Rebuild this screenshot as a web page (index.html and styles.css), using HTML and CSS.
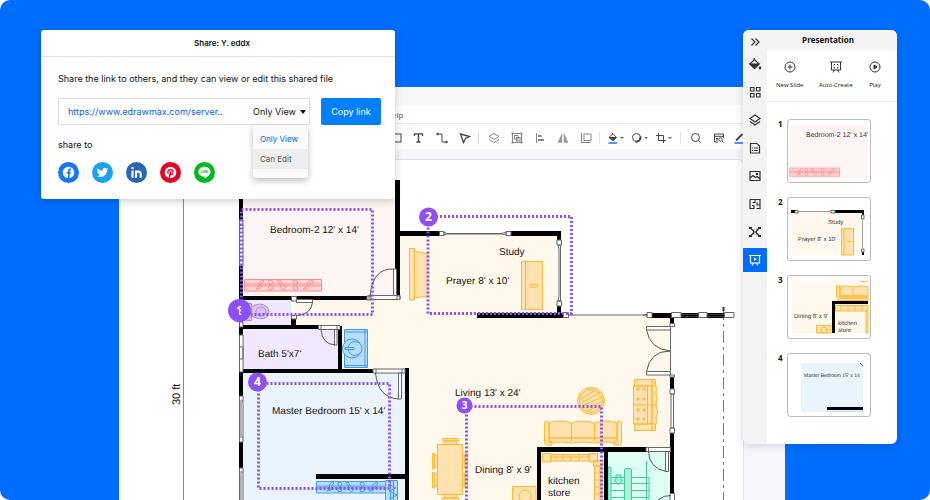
FILE: index.html
```html
<!DOCTYPE html>
<html lang="en">
<head>
<meta charset="utf-8">
<title>Floor plan sharing</title>
<link rel="stylesheet" href="styles.css">
</head>
<body>
<main class="stage">

  <section class="window" aria-label="Editor">
    <div class="titlebar"></div>
    <nav class="menubar"><a href="#help">Help</a></nav>
    <div class="toolbar" role="toolbar" aria-label="Drawing tools">
      <button class="tool" aria-label="Rectangle"><svg viewBox="0 0 12 12"><rect x="2" y="2" width="9" height="8"/></svg></button>
      <button class="tool" aria-label="Text"><svg viewBox="0 0 12 12"><path d="M1.500 4V1.800H9.500V4M5.500 2V10M3.500 10H7.500" stroke-width="1.300"/></svg></button>
      <button class="tool" aria-label="Connector"><svg viewBox="0 0 12 12"><path d="M2 2H6V10H10"/><circle cx="1.500" cy="2" r=".8" fill="#444"/><circle cx="10.500" cy="10" r=".8" fill="#444"/></svg></button>
      <button class="tool" aria-label="Select"><svg viewBox="0 0 12 12"><path d="M1.500 2L10.500 4.500L6.500 6.500L4.500 10.500Z" stroke-width="1.300"/></svg></button>
      <span class="sep"></span>
      <button class="tool soft" aria-label="Layers"><svg viewBox="0 0 12 12"><path d="M6 1.500L11 4.500L6 7.500L1 4.500ZM1 7.500L6 10.500L11 7.500"/></svg></button>
      <button class="tool soft" aria-label="Group"><svg viewBox="0 0 12 12"><rect x="1.500" y="1.500" width="9" height="9"/><rect x="3.500" y="3.500" width="3.500" height="3.500"/><rect x="5.500" y="5.500" width="3.500" height="3.500"/><path d="M.5 1.500h2M9.500 1.500h2M.5 10.500h2M9.500 10.500h2" stroke-width="2"/></svg></button>
      <button class="tool soft" aria-label="Align"><svg viewBox="0 0 12 12"><path d="M2.500 1V11"/><path d="M4 4H7.500M4 8H10" stroke-width="2"/></svg></button>
      <button class="tool soft" aria-label="Flip"><svg viewBox="0 0 12 12"><path d="M5 1.500V10.500H1ZM7 1.500V10.500H11Z" fill="#999" stroke="#999" stroke-width=".5"/></svg></button>
      <button class="tool soft" aria-label="Frame"><svg viewBox="0 0 12 12"><path d="M1.500 1V10.500H11"/><rect x="4" y="2" width="7" height="6.500"/></svg></button>
      <span class="sep"></span>
      <button class="tool wide" aria-label="Fill colour"><svg viewBox="0 0 12 12"><path d="M5 1L6 2M2 5.500L6 1.800L9.500 5.500L6 8.500Z"/><path d="M2.500 5.500H9.500L6 8.500Z" fill="#444"/><path d="M1.500 11H10" stroke="#0a7bff" stroke-width="1.500"/></svg><i class="caret"></i></button>
      <button class="tool wide" aria-label="Shadow"><svg viewBox="0 0 12 12"><circle cx="5.500" cy="5.500" r="4"/><path d="M9.500 4.500A4.500 4.500 0 0 1 4.500 9.700" stroke-width="2"/></svg><i class="caret"></i></button>
      <button class="tool wide" aria-label="Crop"><svg viewBox="0 0 12 12"><path d="M3.500 1V8.500H11M1 3.500H8.500V11"/></svg><i class="caret"></i></button>
      <span class="sep late"></span>
      <button class="tool" aria-label="Search"><svg viewBox="0 0 12 12"><circle cx="5.500" cy="5.500" r="4"/><path d="M8.500 8.500L10.500 10.500"/></svg></button>
      <button class="tool" aria-label="Find in page"><svg viewBox="0 0 12 12"><path d="M5 10H1.500V2H10.500V6M1.500 4.300H10.500M3 6.500H5M3 8H5"/><circle cx="7.500" cy="7.500" r="1.700"/><path d="M9 9L10.500 10.500"/></svg></button>
      <button class="tool narrow" aria-label="Pen"><svg viewBox="0 0 12 12"><path d="M3 8.500L9.500 2" stroke-width="1.800"/><path d="M1.500 11H11" stroke="#0a7bff" stroke-width="1.500"/></svg></button>
    </div>
    <div class="workspace">
      <svg class="plan" viewBox="121 160 622 340" preserveAspectRatio="xMinYMin slice" role="img" aria-label="Floor plan">
        <defs>
          <symbol id="hangers" viewBox="0 0 78 14" preserveAspectRatio="none">
            <path d="M.5 1.500H77.500V13H.5ZM.5 6H77.500M.5 8H77.500M12 11L15 9V5L18 2L20 3L17 6V10ZM24 3L27 2L29 4L27 7L29 11L25 12L24 10L26 7ZM33 3L36 2L38 6L42 9L40 12L37 10L36 6ZM49 3L52 2L54 4L52 7L54 11L50 12L49 10L51 7ZM59 11L62 9L64 4L68 2L69 4L66 6L63 11Z"/>
          </symbol>
        </defs>

        <!-- room floors -->
        <g class="floors">
          <path fill="#fff8ec" d="M400 234H559V315H671V500H341V326H294V299H400Z"/>
          <rect x="242" y="182" width="155" height="115" fill="#fff5f5"/>
          <rect x="242" y="299" width="49" height="27" fill="#f1e8ff"/>
          <rect x="242" y="329" width="97" height="41" fill="#f1e8ff"/>
          <rect x="242" y="372" width="164" height="128" fill="#eaf4ff"/>
          <rect x="607" y="450" width="64" height="50" fill="#ddfff3"/>
        </g>

        <!-- dimension lines -->
        <path d="M183.500 160V500" stroke="#888"/>
        <path d="M723.500 308V500" stroke="#777" stroke-dasharray="12 4 3 4"/>
        <path d="M723.500 307V311" stroke="#333" stroke-width="2"/>

        <!-- furniture -->
        <g class="amber">
          <path d="M409.500 248.500H414.500V300H409.500ZM414.500 251L428 254V296L414.500 298Z"/>
          <path d="M521.500 261.500H542.500V309.500H521.500ZM525.500 261.500V309.500M530.500 284.500H537.500V287H530.500Z"/>
          <path d="M437.500 444.500H462.500V494.500H437.500ZM442.500 438.500H458.500V441H442.500ZM444 441H457V444.500H444ZM432.500 453.500H434.500V469H432.500ZM434.500 455H437.500V467H434.500ZM432.500 472.500H434.500V488H432.500ZM434.500 474H437.500V486H434.500ZM465 453.500H467.500V469H465ZM465 472.500H467.500V488H465ZM462.500 455H465V467H462.500ZM462.500 474H465V486H462.500ZM444 494.500H457V498H444ZM442 498H459V501H442Z"/>
          <circle cx="591" cy="401" r="13.500"/><circle cx="591" cy="401" r="11.500"/>
          <path d="M581 399L594 391M582 402L600 393M582 406L602 397M586 408L601 402M587 411L600 405"/>
          <path d="M549 438V423Q560 419 571 423Q583 419 594 423Q606 419 617 423V438ZM571.500 423V441M594.500 423V441M549 438H617V443Q606 441 594 443Q583 441 571 443Q560 441 549 443ZM544.500 424Q544 421 547 421Q549 421 549 424V438Q549 441 552 442V445H546Q544.500 444 544.500 440ZM621.500 424Q622 421 619 421Q617 421 617 424V438Q617 441 614 442V445H620Q621.500 444 621.500 440Z"/>
          <path d="M633.500 386H647.500V424H633.500ZM634.500 379.500H655.500V386H634.500ZM634.500 424H655.500V430.500H634.500ZM647.500 386H652V424H647.500ZM652 380Q658 386 656 392Q658 399 656 405Q659 412 656 418Q658 425 652 430ZM633.500 405H656M636 389h4m-2-2v4M642 389h4m-2-2v4M636 399h4m-2-2v4M642 399h4m-2-2v4M636 410h4m-2-2v4M642 410h4m-2-2v4M636 419h4m-2-2v4M642 419h4m-2-2v4"/>
          <path d="M512.500 486.500H536V501H512.500Z"/><circle cx="525" cy="496" r="6"/>
          <path d="M542.500 453.500H551V462H542.500ZM589 453.500H597.500V462H589ZM551 454.500H589V461H551ZM551 457H589M556 454.500V461M563 454.500V461M571 454.500V461M579 454.500V461M593.500 460.500H603V466H593.500ZM594.500 466H602V501H594.500ZM600 466V501M594.500 473H602M594.500 480H602M594.500 487H602M594.500 494H602"/>
        </g>
        <g class="sky">
          <path d="M344.500 329.500H367.500V367.500H344.500ZM344.500 332H367.500M344.500 365.500H367.500M365 329.500V367.500"/>
          <circle cx="352" cy="348.500" r="9.500"/><circle cx="355" cy="348.500" r="7"/><path d="M345 347.500H354Q356 348.500 354 349.500H345Z"/>
          <rect x="316" y="481" width="69" height="12" stroke="none"/>
          <use href="#hangers" x="316" y="480" width="70" height="14"/>
          <path d="M385.500 480.500H397.500V501H385.500ZM390.500 480.500V501M393.500 480.500V501M388 484L396 488L389 491L397 495L389 499"/>
        </g>
        <g class="rose"><rect x="244" y="280" width="77" height="11" stroke="none"/><use href="#hangers" x="244" y="278" width="78" height="14"/></g>
        <g class="violet"><path d="M246.500 303.500H251.500V320.500H246.500ZM251.500 307Q260 301 267 307Q271 312 267 317Q260 321 251.500 316Z"/><ellipse cx="261" cy="311.500" rx="5" ry="4.500"/></g>
        <g class="mint">
          <path d="M608 467.500H611V501H608ZM624.500 470Q624.500 468.500 626 468.500H630Q631.500 468.500 631.500 470V501H624.500ZM646.500 461V501M611 477.500H624M631.500 477.500H649M611 483.500H624M631.500 483.500H649M611 490.500H624M631.500 490.500H649M611 497.500H624M631.500 497.500H649M649 477V501M616 475H621V480H623L618.500 485L614 480H616Z"/>
        </g>

        <!-- walls -->
        <g class="walls">
          <path d="M239 180H243V500H239ZM395 180H400V297H395ZM239 296H369V300H239ZM239 325H318V329H239ZM291 318H296V326H291ZM338 326H342V370H338ZM239 369H373V373H239ZM405 368H409V500H405ZM316 474H406V479H316Z"/>
          <path d="M400 231H440V236H400ZM510 231H561V236H510ZM557 231H561V241H557ZM557 305H561V315H557ZM477 313H563V318H477ZM652 313H672V318H652ZM670 317H674V324H670ZM670 377H674V389H670ZM670 432H674V493H670ZM537 447H646V452H537ZM537 447H541V500H537ZM604 447H608V500H604Z"/>
          <path d="M680 313H725V318H680Z"/>
        </g>
        <path d="M681 314.500H725M681 316.500H725" stroke="#777" stroke-width=".5"/>

        <!-- windows, doors and joints -->
        <g class="frames">
          <path d="M239.500 219.500H243V225H239.500ZM239.500 225H243V260H239.500ZM239.500 260H243V266H239.500ZM239.500 322H243V327H239.500ZM239.500 335H243V372H239.500ZM239.500 347H243V359H239.500ZM239.500 396H243V442H239.500ZM239.500 401H243M239.500 437H243M241 402V436M239.500 468H243V501H239.500ZM239.500 472H243M241 473V501"/>
          <path d="M369 295.500H400V299.500H369ZM367 296H371V300H367ZM397 296H400V299.500H397ZM393.500 269H396.500V295.500H393.500Z"/>
          <path d="M291.500 296.500H296.500V301H291.500ZM296.500 299.500H312.500V302.500H296.500ZM291.500 315.500H296.500V319H291.500Z"/>
          <path d="M318.500 325.500H340V329.500H318.500ZM321 325.500V329.500M337 325.500V329.500M334.500 329.500H337V345H334.500Z"/>
          <path d="M373 369H405V373H373ZM376 369V373M402 369V373M398.500 373H401.500V399H398.500Z"/>
          <path d="M439.500 231.500H444V235.500H439.500ZM506 231.500H511V235.500H506ZM444 232L447 233.500H502L506 232V235L502 234H447L444 235ZM557 240H561.500V245H557ZM557 301H561.500V306H557ZM558 245L559 249V296L558 301H560.500V245Z"/>
          <path d="M563.500 312.500H568.500V317.500H563.500ZM569 315H643L647 314V316L643 315.500M647 312.500H652V317.500H647ZM671.500 312.500H681V317.500H671.500ZM698.500 312.500H707V317.500H698.500ZM724.500 312.500H734V317.500H724.500Z"/>
          <path d="M670 323.500H674.500V326.500H670ZM646.500 326.500H670.500V330H646.500ZM646.500 371.500H670.500V375H646.500ZM670.500 330V371M670 375H674.500V377H670ZM670 389H674.500V394H670ZM670 428H674.500V433H670ZM671 394H673.500V428H671ZM646 447.500H670.500V451.500H646ZM648.500 447.500V451M665.500 451.500H668.500V471.500H665.500ZM670 493.500H674.500V501H670Z"/>
        </g>
        <path class="swing" d="M370 297Q372 268 394 269M312.500 302.500Q311 315 296 315.500M321 329.500Q322 344 335 345M375.500 373Q378 398 399 399M646.500 330Q650 349 670 351Q650 351 646.500 371.500M648.500 451.500Q649 468 666 471.500M658 500Q664 495 671 495.500"/>

        <g class="labels">
          <text x="270" y="233">Bedroom-2 12' x 14'</text>
          <text x="499" y="255">Study</text>
          <text x="446" y="284">Prayer 8' x 10'</text>
          <text x="258" y="357">Bath 5'x7'</text>
          <text x="272" y="414">Master Bedroom 15' x 14'</text>
          <text x="455" y="396">Living 13' x 24'</text>
          <text x="475" y="473">Dining 8' x 9'</text>
          <text x="548" y="484">kitchen</text>
          <text x="548" y="496">store</text>
          <text class="dim" transform="translate(180 405) rotate(-90)">30 ft</text>
        </g>

        <!-- numbered slide regions -->
        <g class="badges">
          <circle cx="239.500" cy="310.500" r="11.500"/><text x="239.500" y="315">1</text>
        </g>
        <g class="regions">
          <rect x="241.500" y="209.500" width="131" height="105"/>
          <rect x="428" y="216.500" width="143.500" height="97"/>
          <rect x="466.500" y="406.500" width="135" height="120"/>
          <rect x="258.500" y="383.500" width="131" height="105"/>
        </g>
        <g class="badges">
          <circle cx="428.500" cy="217" r="9.500"/><text x="428.500" y="221">2</text>
          <circle cx="464.500" cy="405.500" r="8"/><text class="small" x="464.500" y="409">3</text>
          <circle cx="257.500" cy="382" r="9.500"/><text x="257.500" y="386">4</text>
        </g>
      </svg>
    </div>
  </section>

  <section class="share" aria-labelledby="share-title">
    <h1 class="share-title" id="share-title">Share: Y. eddx</h1>
    <div class="share-body">
      <label class="hint" for="link">Share the link to others, and they can view or edit this shared file</label>
      <div class="link-row">
        <div class="field">
          <input id="link" type="text" readonly value="https://www.edrawmax.com/server..">
          <div class="access">
            <select aria-label="Access"><option>Only View</option><option>Can Edit</option></select>
            <div class="menu">
              <button class="choice chosen">Only View</button>
              <button class="choice hovered">Can Edit</button>
            </div>
          </div>
        </div>
        <button class="copy">Copy link</button>
      </div>
      <p class="share-to">share to</p>
      <div class="social">
        <a href="#facebook" aria-label="Facebook"><svg viewBox="0 0 20 20"><circle cx="10" cy="10" r="10" fill="#1877f2"/><circle cx="10" cy="10" r="5.500" fill="#fff"/><path d="M12.300 7H11.500Q10.300 7 10.300 8.300V16M8.300 10.300H12.200" fill="none" stroke="#1877f2" stroke-width="1.500"/></svg></a>
        <a href="#twitter" aria-label="Twitter"><svg viewBox="0 0 24 24"><circle cx="12" cy="12" r="12" fill="#1da1f2"/><path transform="translate(5.500 5.500) scale(.54)" fill="#fff" d="M23.950 4.570a10 10 0 0 1-2.820.770 4.960 4.960 0 0 0 2.160-2.720c-.950.560-2 .960-3.130 1.180a4.920 4.920 0 0 0-8.380 4.480C7.690 8.100 4.070 6.130 1.640 3.160a4.920 4.920 0 0 0 1.520 6.570 4.900 4.900 0 0 1-2.230-.610v.060a4.920 4.920 0 0 0 3.950 4.830 5 5 0 0 1-2.210.080 4.940 4.940 0 0 0 4.600 3.420A9.870 9.870 0 0 1 0 19.540a13.990 13.990 0 0 0 7.550 2.210c9.050 0 14-7.500 14-13.980 0-.210 0-.420-.020-.630a9.940 9.940 0 0 0 2.460-2.550z"/></svg></a>
        <a href="#linkedin" aria-label="LinkedIn"><svg viewBox="0 0 20 20"><circle cx="10" cy="10" r="10" fill="#2867b2"/><circle cx="6.200" cy="5.800" r="1.200" fill="#fff"/><path d="M6.200 8V15M9.500 8V15M9.500 11.500Q9.500 9 11.800 9Q14 9 14 11.500V15" fill="none" stroke="#fff" stroke-width="2"/></svg></a>
        <a href="#pinterest" aria-label="Pinterest"><svg viewBox="0 0 20 20"><circle cx="10" cy="10" r="10" fill="#e60023"/><circle cx="10" cy="10" r="5.500" fill="#fff"/><path d="M8 11.300Q6.700 9.500 8 8Q10 6.500 12 8Q13.200 9.700 11.700 11.500Q10.600 12.300 9.700 11.300M10.200 8.800L8.700 15" fill="none" stroke="#e60023" stroke-width="1.300"/></svg></a>
        <a href="#line" aria-label="LINE"><svg viewBox="0 0 20 20"><circle cx="10" cy="10" r="10" fill="#00b91f"/><path d="M10 4.500C13.300 4.500 15.800 6.600 15.800 9.300C15.800 12 12.500 14.300 10 15.800V14C6.500 13.800 4.200 11.800 4.200 9.300C4.200 6.600 6.700 4.500 10 4.500Z" fill="#fff"/><text class="line-word" x="10" y="10.500">LINE</text></svg></a>
      </div>
    </div>
  </section>

  <aside class="panel" aria-label="Presentation panel">
    <div class="rail">
      <button class="rail-top" aria-label="Collapse"><svg viewBox="0 0 14 14"><path d="M3.500 3.500L7 7L3.500 10.500M7.500 3.500L11 7L7.500 10.500"/></svg></button>
      <button aria-label="Fill"><svg viewBox="0 0 14 14"><path d="M6 1V3M2 7L6.500 2.500L11 7L6.500 11.500Z"/><path d="M2 7H11L6.500 11.500Z" fill="#333"/><circle cx="12" cy="11" r=".8" fill="#333"/></svg></button>
      <button aria-label="Symbols"><svg viewBox="0 0 14 14"><path d="M2.500 2.500H6V6H2.500ZM8.500 2.500H12V6H8.500ZM2.500 8.500H6V12H2.500ZM8.500 8.500H12V12H8.500Z"/></svg></button>
      <button aria-label="Layers"><svg viewBox="0 0 14 14"><path d="M7 2L12 5.500L7 9L2 5.500ZM2 8.500L7 12L12 8.500"/></svg></button>
      <button aria-label="Notes"><svg viewBox="0 0 14 14"><path d="M2.500 2.500H9L11.500 5V12H2.500ZM4 7H5M6 7H10M4 9.500H5M6 9.500H10"/></svg></button>
      <button aria-label="Image"><svg viewBox="0 0 14 14"><path d="M2 2.500H12V11.500H2ZM2 9L5 6.500L7.500 8.500L9 7.500L12 10"/><circle cx="9" cy="5" r=".7"/></svg></button>
      <button aria-label="Floor plan"><svg viewBox="0 0 14 14"><path d="M2 2.500H7V5.500H4.500M7 2.500H12V11.500H8.500M2 2.500V11.500H6V8.500M9 5.500V8H12M6 8.500H4"/></svg></button>
      <button aria-label="Network"><svg viewBox="0 0 14 14"><path d="M3 3.500L5.500 6M11 3.500L8.500 6M3 10.500L5.500 8M11 10.500L8.500 8M5.500 4.500V9.500M8.500 4.500V9.500M5.500 7H8.500"/><path d="M1 3h3M10 3h3M1 11h3M10 11h3" stroke-width="2"/></svg></button>
      <button class="active" aria-label="Presentation"><svg viewBox="0 0 14 14"><path d="M1 2.500H13M2.500 2.500V10H11.500V2.500M5.500 10L4 12.500M8.500 10L10 12.500"/><path d="M6 4.500V8L9 6.200Z" fill="#fff" stroke="none"/></svg></button>
    </div>
    <div class="panel-main">
      <h2 class="panel-title">Presentation</h2>
      <div class="actions">
        <button><svg viewBox="0 0 14 14"><circle cx="7" cy="7" r="5"/><path d="M7 4.500V9.500M4.500 7H9.500"/></svg>New Slide</button>
        <button><svg viewBox="0 0 14 14"><path d="M1 2H13M2.500 2V10H11.500V2M5.500 10L4 12.500M8.500 10L10 12.500M5 5.500V4.500H6M8 4.500H9V5.500M5 7V8H6M8 8H9V7"/></svg>Auto-Create</button>
        <button><svg viewBox="0 0 14 14"><circle cx="7" cy="7" r="5"/><path d="M6 5V9L9 7Z" fill="#333"/></svg>Play</button>
      </div>
      <ol class="slides">
        <li><b>1</b><svg class="thumb" viewBox="0 0 82 62"><rect x="1" y="5" width="79" height="53" fill="#fff5f5"/><g class="rose"><rect x="1" y="48" width="51" height="8" stroke="none"/><use href="#hangers" x="1" y="47" width="51" height="10"/></g><text class="t7" x="18" y="17">Bedroom-2 12' x 14'</text></svg></li>
        <li><b>2</b><svg class="thumb" viewBox="0 0 82 62"><rect x="3" y="14" width="72" height="43" fill="#fff8ec"/><path d="M3 12H7V15H3ZM47 12H76V17H74V15H47ZM74 54H76V57H74Z"/><path d="M10 13.500H43M74.500 22V50" stroke="#888" stroke-width=".8"/><g class="frames"><path d="M7 12.500H10V15H7ZM43 12.500H47V15H43ZM73.500 17H76V21H73.500ZM73.500 51H76V54H73.500Z"/></g><g class="amber"><path d="M53.500 30.500H65.500V57H53.500ZM56 30.500V57M59 43.500H63"/></g><text class="t6" x="40" y="26">Study</text><text class="t6" x="10" y="43">Prayer 8' x 10'</text></svg></li>
        <li><b>3</b><svg class="thumb" viewBox="0 0 82 62"><rect x="4" y="5" width="76" height="52" fill="#fff8ec"/><g class="amber"><path d="M52 11Q58 9 65 11Q72 9 80 11V20H52ZM65 11V22M52 20H80V22H52ZM48.500 10Q52 9 52 12V22H80V24.500H50Q48.500 22 48.500 18ZM47.500 29.500H80V35H47.500ZM53 29.500V35M60 30V35M67 30V35M74 29.500V35M78 35V57H80V35ZM28.500 49.500H43V57H28.500Z"/><circle cx="36" cy="54" r="3"/><path d="M72 5Q77 7 80 5"/></g><path d="M44 25H80V28H47V57H44Z"/><text class="t6" x="6" y="42">Dining 8' x 9'</text><text class="t6" x="50" y="49">kitchen</text><text class="t6" x="50" y="56">store</text></svg></li>
        <li><b>4</b><svg class="thumb" viewBox="0 0 82 62"><rect x="13" y="9" width="62" height="49" fill="#eaf4ff"/><path d="M39 53H75V56H39Z"/><path d="M39 57.500H75" stroke="#b9dcff"/><path d="M72 9L75 12" stroke="#555"/><text class="t5" x="16" y="23">Master Bedroom 15' x 14</text></svg></li>
      </ol>
    </div>
  </aside>
</main>
</body>
</html>
```
FILE: styles.css
```css
* { box-sizing: border-box; }

body {
  margin: 0;
  background: #fff;
  color: #111;
  font-family: Inter, "Open Sans", sans-serif;
}

button, input, select {
  margin: 0;
  padding: 0;
  border: 0;
  background: none;
  color: inherit;
  font: inherit;
}

svg { display: block; }

.stage {
  position: relative;
  min-height: 100vh;
  overflow: hidden;
  border-radius: 10px;
  background: #006dff;
}

/* Editor window */
.window {
  position: absolute;
  top: 87px;
  right: 145px;
  bottom: 0;
  left: 119px;
  display: flex;
  flex-direction: column;
  background: #f5f7fa;
}

.titlebar { height: 18px; background: #f8f8f8; }

.menubar {
  height: 19px;
  padding-left: 267px;
  border-bottom: 1px solid #e8e8e8;
  background: #fff;
  font: 8px/20px "Open Sans", sans-serif;
}

.menubar a { color: #555; text-decoration: none; }

.toolbar {
  display: flex;
  align-items: center;
  height: 25px;
  padding: 3px 0 0 265px;
  overflow: hidden;
  background: #fff;
}

.tool {
  display: flex;
  flex: none;
  align-items: center;
  justify-content: center;
  width: 23px;
  height: 22px;
}

.tool svg {
  width: 12px;
  height: 12px;
  fill: none;
  stroke: #444;
}

.tool.soft svg { stroke: #888; }
.tool.wide { gap: 1px; width: 24px; }
.tool.narrow { width: 18px; }

.caret {
  border: 2px solid transparent;
  border-top-color: #666;
  border-bottom-width: 0;
}

.sep {
  flex: none;
  width: 1px;
  height: 12px;
  margin: 0 3px 0 2px;
  background: #ddd;
}

.sep.late { margin: 0 3px 0 5px; }

.workspace {
  flex: 1;
  min-height: 0;
  margin: 10px 41px 0 2px;
  overflow: hidden;
  border: solid #dfe3e8;
  border-width: 1px 1px 0 0;
  border-radius: 0 6px 0 0;
  background: #fff;
}

/* Floor plan drawing */
.plan { width: 100%; height: 100%; }

.amber { fill: #ffe2b0; stroke: #ffb833; }
.sky { fill: #b9dcff; stroke: #3a9bff; }
.rose { fill: #ffd5d5; stroke: #ff8f8f; }
.violet { fill: #d9c4fa; stroke: #a98bd8; }
.mint { fill: #a9f2d8; stroke: #3fcf9f; }
.frames { fill: #fff; stroke: #666; }
.swing { fill: none; stroke: #555; }

.labels {
  fill: #111;
  font: 10px "Liberation Sans", sans-serif;
  text-rendering: geometricPrecision;
}

.labels .dim { font-size: 11px; }

.regions {
  fill: none;
  stroke: #8f4ff7;
  stroke-width: 3px;
  stroke-dasharray: 2 2;
}

.badges circle { fill: #8f4ff7; }

.badges text {
  fill: #fff;
  font: bold 12px "Open Sans", sans-serif;
  text-anchor: middle;
}

.badges .small { font-size: 10px; }

/* Share dialog */
.share {
  position: absolute;
  top: 30px;
  left: 41px;
  width: 354px;
  border-radius: 3px;
  background: #fff;
  box-shadow: 0 2px 8px rgba(0, 0, 0, .2);
}

.share-title {
  margin: 0;
  padding-left: 8px;
  border-bottom: 1px solid #e2e2e2;
  font-size: 8px;
  line-height: 26px;
  font-weight: 600;
  text-align: center;
}

.share-body { padding: 15px 14px 16px 17px; }

.hint {
  display: block;
  font-size: 9px;
  line-height: 14px;
}

.link-row {
  display: flex;
  gap: 11px;
  margin-top: 12px;
}

.field {
  display: flex;
  flex: 1;
  height: 27px;
  border: 1px solid #ddd;
  border-radius: 2px;
}

.field input {
  flex: 1;
  min-width: 0;
  padding-left: 9px;
  color: #0a62f0;
  font-size: 9px;
}

.access { position: relative; width: 56px; }

.access select {
  width: 100%;
  height: 24px;
  appearance: none;
  font-size: 9px;
}

.access::after {
  content: "";
  position: absolute;
  top: 11px;
  right: 3px;
  border: 3px solid transparent;
  border-top: 4px solid #111;
  border-bottom: 0;
}

.menu {
  position: absolute;
  top: 26px;
  left: 0;
  width: 55px;
  padding: 4px 0 9px;
  border-radius: 0 0 3px 3px;
  background: #fafafa;
  box-shadow: 0 3px 6px rgba(0, 0, 0, .25);
}

.choice {
  display: block;
  width: 100%;
  padding-left: 7px;
  font-size: 8px;
  line-height: 20px;
  text-align: left;
}

.chosen { color: #0a62f0; }
.hovered { background: #eee; color: #555; }

.copy {
  width: 60px;
  height: 27px;
  border-radius: 2px;
  background: #007fff;
  color: #fff;
  font-size: 9px;
}

.share-to {
  margin: 13px 0 11px;
  font-size: 9px;
  line-height: 13px;
}

.social { display: flex; gap: 13px; }
.social svg { width: 21px; height: 21px; }

.line-word {
  fill: #00b91f;
  font: bold 3px "Liberation Sans", sans-serif;
  text-anchor: middle;
}

/* Presentation panel */
.panel {
  position: absolute;
  top: 30px;
  right: 33px;
  display: flex;
  width: 154px;
  overflow: hidden;
  border-radius: 6px;
  background: #fff;
  box-shadow: 0 2px 10px rgba(0, 0, 0, .15);
  font-family: "Open Sans", sans-serif;
}

.rail {
  display: flex;
  flex-direction: column;
  gap: 4px;
  width: 24px;
  padding-top: 2px;
  background: #f4f4f4;
}

.rail button {
  display: flex;
  align-items: center;
  justify-content: center;
  height: 24px;
}

.rail .rail-top { height: 20px; margin-bottom: -4px; }
.rail .active { background: #006dff; }

.rail svg, .actions svg {
  width: 14px;
  height: 14px;
  fill: none;
  stroke: #333;
}

.rail svg { stroke-width: 1.2; }
.rail .active svg { stroke: #fff; }

.panel-main { flex: 1; }

.panel-title {
  margin: 0;
  padding-right: 8px;
  background: #f4f4f4;
  font-size: 8px;
  line-height: 20px;
  font-weight: 700;
  text-align: center;
}

.actions {
  display: flex;
  justify-content: space-between;
  height: 52px;
  padding: 10px 15px 0 9px;
  border-bottom: 1px solid #e4e4e4;
}

.actions button {
  display: flex;
  flex-direction: column;
  align-items: center;
  gap: 6px;
  height: 32px;
  font-size: 6px;
  line-height: 10px;
}

.slides {
  display: grid;
  gap: 14px;
  margin: 0;
  padding: 17px 26px 27px 11px;
  list-style: none;
}

.slides li { display: flex; justify-content: space-between; }
.slides b { font-size: 8px; line-height: 10px; }

.thumb {
  width: 84px;
  height: 64px;
  border: 1px solid #bbb;
  border-radius: 3px;
}

.thumb text {
  fill: #333;
  font-family: "Liberation Sans", sans-serif;
  text-rendering: geometricPrecision;
}

.t7 { font-size: 7px; }
.t6 { font-size: 6px; }
.t5 { font-size: 5px; }
```
